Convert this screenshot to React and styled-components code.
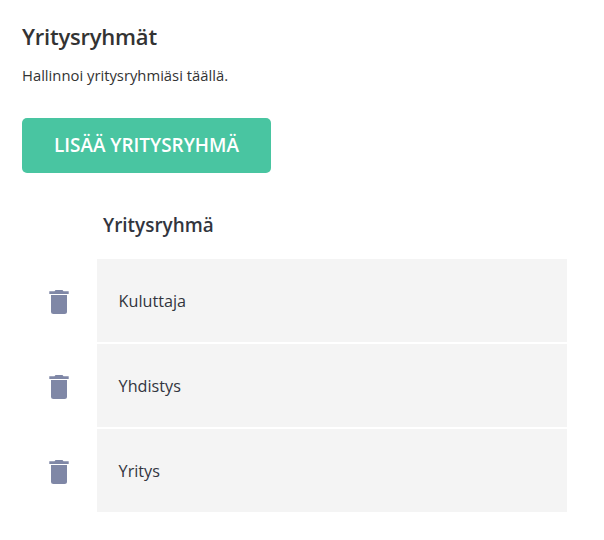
import React from "react";
import styled, { createGlobalStyle } from "styled-components";

const GlobalStyle = createGlobalStyle`
  body {
    margin: 0;
    background: #fff;
    font-family: "Open Sans", sans-serif;
    color: #333;
  }
`;

const Page = styled.main`
  padding: 21px 37px 0 22px;
`;

const Title = styled.h1`
  margin: 0;
  font-size: 22px;
  line-height: 30px;
  font-weight: 600;
  letter-spacing: -0.22px;
`;

const Description = styled.p`
  margin: 14px 0 0;
  font-size: 14.8px;
  line-height: 20px;
`;

const AddButton = styled.button`
  display: flex;
  align-items: center;
  justify-content: center;
  width: 249px;
  height: 55px;
  margin-top: 33px;
  padding: 0 0 1px;
  border: none;
  border-radius: 5px;
  background: #49c5a1;
  color: #fff;
  font-family: inherit;
  font-size: 18.9px;
  font-weight: 600;
  text-transform: uppercase;
  cursor: pointer;
`;

const GroupList = styled.section`
  margin-top: 39px;
  color: #32353e;
`;

const ListHeading = styled.h2`
  margin: 0 0 20px;
  padding-left: 81px;
  font-size: 18.9px;
  line-height: 27px;
  font-weight: 600;
`;

const Rows = styled.ul`
  display: flex;
  flex-direction: column;
  gap: 2px;
  margin: 0;
  padding: 0;
  list-style: none;
`;

const Row = styled.li`
  display: grid;
  grid-template-columns: 75px 1fr;
  height: 83px;
`;

const DeleteButton = styled.button`
  display: flex;
  align-items: center;
  justify-content: center;
  padding: 3px 1px 0 0;
  border: none;
  background: none;
  color: #7f87a6;
  cursor: pointer;
`;

const GroupName = styled.div`
  display: flex;
  align-items: center;
  padding: 0 21.6px;
  background: #f4f4f4;
  font-size: 16.2px;
`;

const TrashIcon = () => (
  <svg width="20" height="24" viewBox="0 0 20 24" fill="currentColor">
    <path d="M2 5h16v16.5a2.500 2.500 0 0 1-2.500 2.500h-11A2.500 2.500 0 0 1 2 21.500z" />
    <path d="M.3 1.300H5.500L6.500 0h7l1 1.300h5.200V4H.3z" />
  </svg>
);

const groups = ["Kuluttaja", "Yhdistys", "Yritys"];

const App = () => {
  return (
    <Page>
      <GlobalStyle />
      <Title>Yritysryhmät</Title>
      <Description>Hallinnoi yritysryhmiäsi täällä.</Description>
      <AddButton type="button">Lisää yritysryhmä</AddButton>
      <GroupList>
        <ListHeading>Yritysryhmä</ListHeading>
        <Rows>
          {groups.map((name) => (
            <Row key={name}>
              <DeleteButton type="button" aria-label="Poista">
                <TrashIcon />
              </DeleteButton>
              <GroupName>{name}</GroupName>
            </Row>
          ))}
        </Rows>
      </GroupList>
    </Page>
  );
};

export default App;
